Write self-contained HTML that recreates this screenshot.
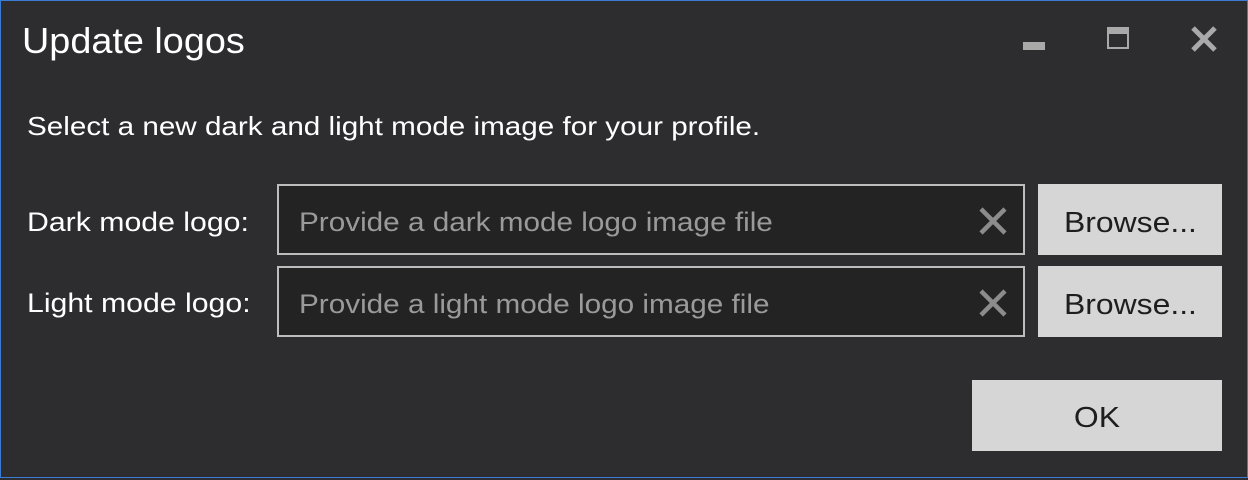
<!DOCTYPE html>
<html><head><style>
html,body{margin:0;padding:0;width:1248px;height:480px;background:#2d2d30;overflow:hidden;font-family:"Liberation Sans","DejaVu Sans",sans-serif}
.win{position:absolute;left:0;top:0;width:1246px;height:476px;border:1px solid #3a7bd5;background:#2d2d30}
.t{position:absolute;white-space:nowrap;transform-origin:0 0}
.box{position:absolute;left:277px;width:744px;height:67px;border:2px solid #bdbdbd;background:#232323}
.ph{position:absolute;left:20px;top:21px;font-size:27px;color:#9a9a9a;white-space:nowrap;transform:scaleX(1.1);transform-origin:0 0}
.btn{position:absolute;background:#d6d6d6;color:#1e1e1e;font-size:29px;text-align:center}
.btn span{display:inline-block;transform:scaleX(1.1)}
</style></head><body>
<div class="win"></div>
<div class="t" style="left:22px;top:20px;font-size:36px;color:#fff;transform:scaleX(1.05)">Update logos</div>
<div style="position:absolute;left:1023px;top:42px;width:22px;height:8px;background:#a9a9a9"></div>
<div style="position:absolute;left:1107px;top:27px;border:2px solid #a9a9a9;border-top-width:7px;width:18px;height:13px"></div>
<svg style="position:absolute;left:1190px;top:25px" width="28" height="28" viewBox="0 0 28 28"><path d="M3 3L25 25M25 3L3 25" stroke="#a9a9a9" stroke-width="5"/></svg>
<div class="t" style="left:27px;top:111px;font-size:26px;color:#fff;transform:scaleX(1.14)">Select a new dark and light mode image for your profile.</div>
<div class="t" style="left:27px;top:207px;font-size:27px;color:#fff;transform:scaleX(1.12)">Dark mode logo:</div>
<div class="t" style="left:27px;top:288px;font-size:27px;color:#fff;transform:scaleX(1.12)">Light mode logo:</div>
<div class="box" style="top:184px"><div class="ph">Provide a dark mode logo image file</div>
<svg style="position:absolute;left:700px;top:21px" width="28" height="28" viewBox="0 0 28 28"><path d="M2 2L26 26M26 2L2 26" stroke="#8c8c8c" stroke-width="4.5"/></svg></div>
<div class="box" style="top:266px"><div class="ph">Provide a light mode logo image file</div>
<svg style="position:absolute;left:700px;top:21px" width="28" height="28" viewBox="0 0 28 28"><path d="M2 2L26 26M26 2L2 26" stroke="#8c8c8c" stroke-width="4.5"/></svg></div>
<div class="btn" style="left:1038px;top:184px;width:184px;height:71px;line-height:78px"><span>Browse...</span></div>
<div class="btn" style="left:1038px;top:266px;width:184px;height:71px;line-height:78px"><span>Browse...</span></div>
<div class="btn" style="left:972px;top:380px;width:250px;height:71px;line-height:76px"><span>OK</span></div>
</body></html>
